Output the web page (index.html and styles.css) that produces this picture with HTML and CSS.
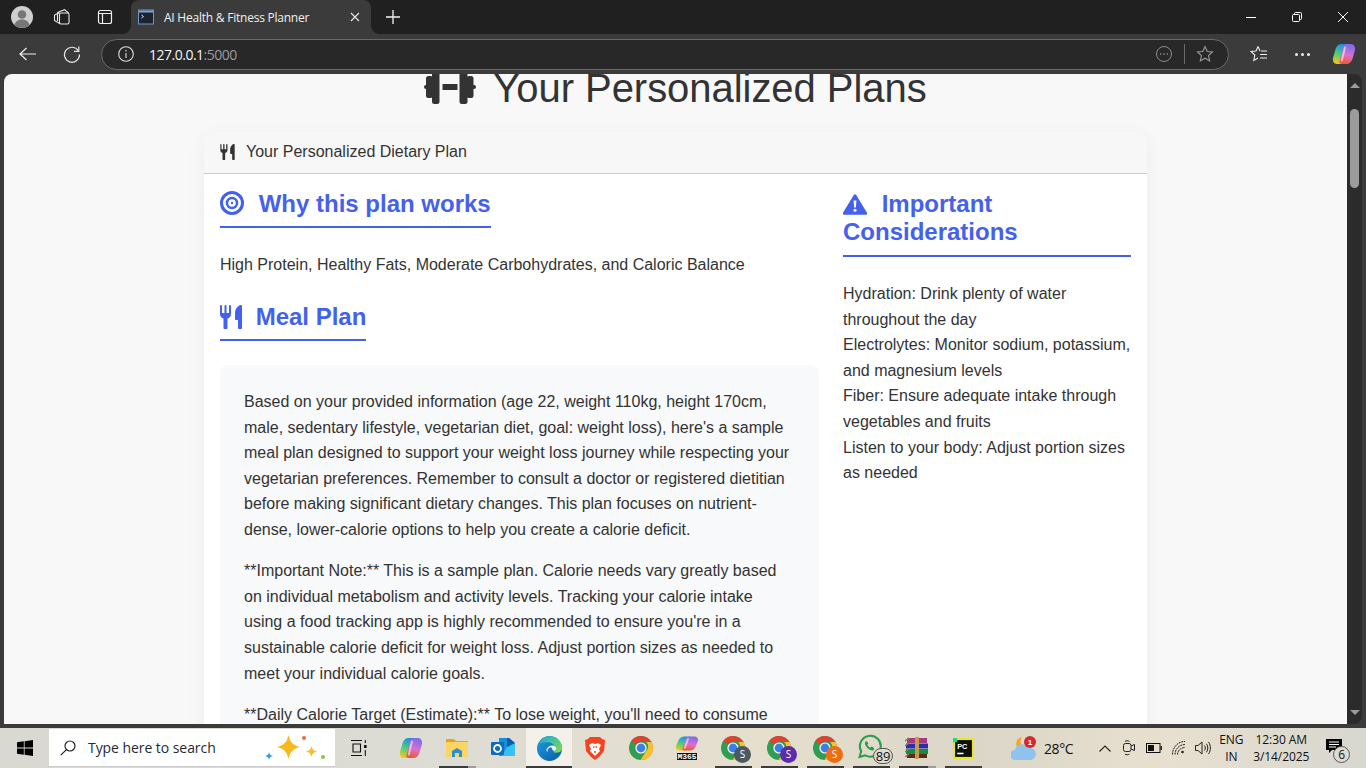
FILE: index.html
```html
<!DOCTYPE html>
<html lang="en">
<head>
<meta charset="utf-8">
<title>AI Health &amp; Fitness Planner</title>
<link rel="stylesheet" href="styles.css">
</head>
<body>
<header class="titlebar">
  <div class="avatar"><svg viewBox="0 0 22 22" width="22" height="22"><circle cx="11" cy="11" r="11" fill="#cfcfcf"/><circle cx="11" cy="8.500" r="4.300" fill="#767676"/><path d="M3.500 19c1-4 4-5.500 7.500-5.500s6.500 1.500 7.500 5.500a11 11 0 0 1-15 0z" fill="#767676"/></svg></div>
  <div class="tb-icon workspaces"><svg viewBox="0 0 18 18" width="18" height="18" fill="none" stroke="#e8e8e8" stroke-width="1.100"><rect x="6.500" y="5" width="9.500" height="11" rx="1.500"/><path d="M4.500 4.500l7-2.800 4 3.300M1.500 7l5-2.300M1.500 7v5.500l5.500 3.300M4.500 4.500V13"/></svg></div>
  <div class="tb-icon tabs"><svg viewBox="0 0 16 16" width="16" height="16" fill="none" stroke="#f0f0f0" stroke-width="1.200"><rect x="1.500" y="1.500" width="13" height="13" rx="2"/><path d="M1.500 4.500h13M5.500 4.500v10"/></svg></div>
  <div class="tab">
    <svg class="favicon" viewBox="0 0 16 16" width="16" height="16"><rect x="0.500" y="1" width="15" height="14" fill="#1d2430" stroke="#6f95c8"/><rect x="1" y="1.500" width="14" height="2" fill="#7ea6d8"/><path d="M3.500 6l2 1.500-2 1.500" fill="none" stroke="#dfe6ef" stroke-width="1"/></svg>
    <span class="tab-title">AI Health &amp; Fitness Planner</span>
    <svg class="tab-close" viewBox="0 0 10 10" width="10" height="10" stroke="#e8e8e8" stroke-width="1.100"><path d="M1 1l8 8M9 1l-8 8"/></svg>
  </div>
  <svg class="newtab" viewBox="0 0 14 14" width="14" height="14" stroke="#f2f2f2" stroke-width="1.300"><path d="M7 0v14M0 7h14"/></svg>
  <div class="winctl">
    <svg viewBox="0 0 10 10" width="10" height="10" stroke="#fff" stroke-width="1"><path d="M0 5.500h10"/></svg>
    <svg viewBox="0 0 10 10" width="10" height="10" fill="none" stroke="#fff" stroke-width="1"><rect x="0.500" y="2.500" width="7" height="7" rx="1"/><path d="M2.500 2.500v-1a1 1 0 0 1 1-1h5a1 1 0 0 1 1 1v5a1 1 0 0 1-1 1h-1"/></svg>
    <svg viewBox="0 0 10 10" width="10" height="10" stroke="#fff" stroke-width="1"><path d="M0 0l10 10M10 0l-10 10"/></svg>
  </div>
</header>

<nav class="toolbar">
  <svg class="back" viewBox="0 0 18 14" width="18" height="14" fill="none" stroke="#f0f0f0" stroke-width="1.200"><path d="M1 7h16M7.500 1l-6.500 6 6.500 6"/></svg>
  <svg class="reload" viewBox="0 0 18 18" width="18" height="18" fill="none" stroke="#e8e8e8" stroke-width="1.200"><path d="M15.500 6a7.500 7.500 0 1 0 1 3.500"/><path d="M15.800 1.500v4.800h-4.800"/></svg>
  <div class="address">
    <svg class="info" viewBox="0 0 16 16" width="16" height="16" fill="none" stroke="#e0e0e0" stroke-width="1.100"><circle cx="8" cy="8" r="7.300"/><path d="M8 7v5M8 4v1.500"/></svg>
    <span class="url"><span class="host">127.0.0.1</span>:5000</span>
    <svg class="dots-circle" viewBox="0 0 16 16" width="16" height="16" fill="none" stroke="#8c8c8c" stroke-width="1"><circle cx="8" cy="8" r="7.500"/><path d="M4 8h1.300M7.300 8h1.400M10.700 8h1.300" stroke-width="1.300"/></svg>
    <span class="addr-div"></span>
    <svg class="star" viewBox="0 0 18 18" width="18" height="18" fill="none" stroke="#9a9a9a" stroke-width="1.100"><path d="M9 1.500l2.200 5 5.300.5-4 3.600 1.200 5.400-4.700-2.800-4.700 2.800 1.200-5.400-4-3.600 5.300-.5z"/></svg>
  </div>
  <svg class="fav" viewBox="0 0 18 18" width="18" height="18" fill="none" stroke="#eee" stroke-width="1.100"><path d="M8 1.500l2 4.500M8 1.500L6 6l-5 .5 3.800 3.500-1 5.500L8 13"/><path d="M11 6h6M10 9.500h7M10 13h7"/></svg>
  <div class="more"><i></i><i></i><i></i></div>
  <svg class="copilot-top" viewBox="0 0 24 24" width="24" height="24"><use href="#copilot"/></svg>
</nav>

<div class="main">
  <div class="page">
    <h1 class="title">
      <svg class="ic-dumbbell" viewBox="0 0 52 36" width="52" height="36" fill="#333"><rect x="8" y="0" width="7.500" height="34" rx="2.500"/><rect x="2" y="6" width="7" height="22" rx="2.500"/><rect x="0" y="15" width="4" height="4" rx="2"/><rect x="35.500" y="0" width="8" height="34" rx="2.500"/><rect x="42.500" y="6" width="7" height="22" rx="2.500"/><rect x="48" y="15" width="4" height="4" rx="2"/><rect x="18.500" y="14" width="15" height="6"/></svg>
      <span>Your Personalized Plans</span>
    </h1>
    <section class="card">
      <div class="card-header">
        <svg class="ic-utensils-sm" viewBox="0 0 22 24" width="15" height="16" fill="#333"><use href="#utensils"/></svg>
        <span>Your Personalized Dietary Plan</span>
      </div>
      <div class="card-body">
        <div class="col-main">
          <h3 class="heading">
            <svg class="ic-target" viewBox="0 0 24 24" width="24" height="24" fill="none" stroke="#4361ee"><circle cx="12" cy="12" r="10.500" stroke-width="3"/><circle cx="12" cy="12" r="5" stroke-width="2.500"/><circle cx="12" cy="12" r="1.200" fill="#4361ee" stroke="none"/></svg>
            <span>Why this plan works</span>
          </h3>
          <p class="summary">High Protein, Healthy Fats, Moderate Carbohydrates, and Caloric Balance</p>
          <h3 class="heading">
            <svg class="ic-utensils" viewBox="0 0 22 24" width="22" height="24" fill="#4361ee"><use href="#utensils"/></svg>
            <span>Meal Plan</span>
          </h3>
          <div class="meal-box">
            <p>Based on your provided information (age 22, weight 110kg, height 170cm, male, sedentary lifestyle, vegetarian diet, goal: weight loss), here's a sample meal plan designed to support your weight loss journey while respecting your vegetarian preferences. Remember to consult a doctor or registered dietitian before making significant dietary changes. This plan focuses on nutrient-dense, lower-calorie options to help you create a calorie deficit.</p>
            <p>**Important Note:** This is a sample plan. Calorie needs vary greatly based on individual metabolism and activity levels. Tracking your calorie intake using a food tracking app is highly recommended to ensure you're in a sustainable calorie deficit for weight loss. Adjust portion sizes as needed to meet your individual calorie goals.</p>
            <p>**Daily Calorie Target (Estimate):** To lose weight, you'll need to consume</p>
          </div>
        </div>
        <aside class="col-side">
          <h3 class="heading">
            <svg class="ic-warn" viewBox="0 0 24 21" width="24" height="21"><path d="M12 1.500L23 19.500H1z" fill="#4361ee" stroke="#4361ee" stroke-width="2.500" stroke-linejoin="round"/><path d="M10.600 6.500h2.800l-.5 7h-1.800z" fill="#fff"/><circle cx="12" cy="16.300" r="1.500" fill="#fff"/></svg>
            <span>Important Considerations</span>
          </h3>
          <ul class="notes">
            <li>Hydration: Drink plenty of water throughout the day</li>
            <li>Electrolytes: Monitor sodium, potassium, and magnesium levels</li>
            <li>Fiber: Ensure adequate intake through vegetables and fruits</li>
            <li>Listen to your body: Adjust portion sizes as needed</li>
          </ul>
        </aside>
      </div>
    </section>
  </div>
  <div class="scrollbar">
    <span class="arrow up"></span>
    <span class="thumb"></span>
    <span class="arrow down"></span>
  </div>
</div>

<footer class="taskbar">
  <div class="start"><svg viewBox="0 0 16 16" width="16" height="16" fill="#000"><path d="M0 2.300l6.800-1v6.300H0zM7.600 1.200L16 0v7.600H7.600zM0 8.400h6.800v6.300l-6.800-1zM7.600 8.400H16V16l-8.400-1.200z"/></svg></div>
  <div class="search">
    <svg class="search-ic" viewBox="0 0 16 16" width="16" height="16" fill="none" stroke="#222" stroke-width="1.200"><circle cx="10" cy="6" r="5"/><path d="M6.400 9.600L.8 15.200"/></svg>
    <span class="search-text">Type here to search</span>
    <svg class="sparkles" viewBox="0 0 62 30" width="62" height="30"><path d="M24.500 2c1.800 7.500 4 9.800 11.500 12-7.500 2.200-9.700 4.500-11.500 12-1.800-7.500-4-9.800-11.500-12 7.500-2.200 9.700-4.500 11.500-12z" fill="#f9b81c"/><path d="M47.500 13c1 3.500 2 4.500 5.500 5.500-3.500 1-4.500 2-5.500 5.500-1-3.500-2-4.500-5.500-5.500 3.500-1 4.500-2 5.500-5.500z" fill="#f9c02c"/><path d="M5 19c.6 2.700 1.300 3.400 4 4-2.700.6-3.400 1.300-4 4-.6-2.700-1.300-3.400-4-4 2.700-.6 3.400-1.300 4-4z" fill="#2e9fe6"/><circle cx="40" cy="5" r="2" fill="#ee6a3a"/><circle cx="59" cy="24" r="2" fill="#8cc63f"/></svg>
  </div>
  <div class="app first"><svg viewBox="0 0 16 16" width="16" height="16" fill="none" stroke="#111" stroke-width="1.100"><path d="M0 .5h11M0 15.500h11M2 4h7.500v8H2z"/><rect x="13" y="5" width="2.600" height="3" fill="#111" stroke="none"/><path d="M14.300 0v3M14.300 10v6"/></svg></div>
  <div class="app"><svg viewBox="0 0 24 24" width="24" height="24"><use href="#copilot"/></svg></div>
  <div class="app running partial"><svg viewBox="0 0 22 20" width="22" height="20"><path d="M0 2a1 1 0 0 1 1-1h7l2 2h11a1 1 0 0 1 1 1v14a1 1 0 0 1-1 1H1a1 1 0 0 1-1-1z" fill="#e8a317"/><rect y="4" width="22" height="15" rx="1" fill="#fcd462"/><path d="M6 13l5-3 5 3v6h-3v-4H9v4H6z" fill="#2b8fd8"/></svg></div>
  <div class="app"><svg viewBox="0 0 24 22" width="24" height="22"><path d="M8 1h10l6 5v12a1 1 0 0 1-1 1H9a1 1 0 0 1-1-1z" fill="#1590d8"/><path d="M16 10l8-4v12a1 1 0 0 1-1 1H11z" fill="#34c3f0"/><path d="M16 1h2l6 5-8 4z" fill="#0b5fa8"/><rect x="0" y="5" width="13" height="13" rx="1" fill="#0f6cbd"/><circle cx="6.500" cy="11.500" r="3.500" fill="none" stroke="#fff" stroke-width="1.800"/></svg></div>
  <div class="app running active"><svg viewBox="0 0 24 24" width="25" height="25"><defs><linearGradient id="edgeg" x1="0" y1="0" x2="1" y2="1"><stop offset="0" stop-color="#1fa7d8"/><stop offset="1" stop-color="#7de04a"/></linearGradient><linearGradient id="edgeb" x1="0" y1="0" x2="1" y2="1"><stop offset="0" stop-color="#1e9ee0"/><stop offset="1" stop-color="#0a5aa8"/></linearGradient></defs><circle cx="12" cy="12" r="12" fill="url(#edgeb)"/><path d="M2 7C4 3 8 0 12 0c7 0 12 5 12 12 0 2-2 4-5 4-1.500 0-3-.3-3.500-1 2-.5 3-2 2-4-1-3-4-5-7-5C7 6 4 6.500 2 7z" fill="url(#edgeg)"/><path d="M9 14c0-3 3-5 6-5 2 0 3.500 1.500 3.500 3 0 1-1 2-2 2.500-1-.3-2-1.200-2-2.500 0-1.500-3-1.500-4 .5-.5 1-.5 2 0 3z" fill="#f0f4ee"/></svg></div>
  <div class="app"><svg viewBox="0 0 20 23" width="20" height="23"><path d="M5 0h10l2 2 3 1-1 11-5 6-4 3-4-3-5-6-1-11 3-1z" fill="#f4431f"/><path d="M10 7l3-1 3 2-2 4 1 2-5 5-5-5 1-2-2-4 3-2z" fill="#fff"/><path d="M8 10h1.500M10.500 10H12M9 15h2" stroke="#f4431f" stroke-width="1.300"/></svg></div>
  <div class="app"><svg viewBox="0 0 24 24" width="24" height="24"><use href="#chrome"/></svg></div>
  <div class="app m365"><svg viewBox="0 0 24 24" width="24" height="17" preserveAspectRatio="none"><use href="#copilot"/></svg><span class="m365-label">M365</span></div>
  <div class="app running"><svg viewBox="0 0 24 24" width="24" height="24"><use href="#chrome"/></svg><span class="badge-s b-slate">S</span></div>
  <div class="app running"><svg viewBox="0 0 24 24" width="24" height="24"><use href="#chrome"/></svg><span class="badge-s b-purple">S</span></div>
  <div class="app running"><svg viewBox="0 0 24 24" width="24" height="24"><use href="#chrome"/></svg><span class="badge-s b-orange">S</span></div>
  <div class="app running wa"><svg viewBox="0 0 24 24" width="25" height="25" fill="none"><path d="M2.500 22l1.500-5.500A10 10 0 1 1 8 20.500z" stroke="#2a9d4e" stroke-width="2"/><path d="M8 7.500c-1 1.500 0 4 2 6s4.500 3 6 2l.5-2-2.500-1.500-1 1c-1.500-.5-2.500-1.500-3-3l1-1L9.500 7z" fill="#2a9d4e"/></svg><span class="count-89">89</span></div>
  <div class="app running partial"><svg viewBox="0 0 24 22" width="24" height="22"><rect x="2" y="1" width="20" height="5" fill="#a8397f"/><rect x="1" y="6.500" width="22" height="5" fill="#2431a8"/><rect x="1" y="12" width="22" height="5" fill="#10903c"/><rect x="2" y="17" width="20" height="4" fill="#5e2a1e"/><path d="M0 4l4-3M0 9l4-3M0 15l4-3M0 20l4-3" stroke="#8c7a5c" stroke-width="1.500"/><rect x="10" y="0" width="4" height="22" fill="#c89a4e"/></svg></div>
  <div class="app running"><svg viewBox="0 0 20 20" width="21" height="21"><rect width="20" height="20" fill="#e8e62a"/><rect x="2" y="2" width="16" height="16" fill="#0b0f0c"/><rect x="0" y="0" width="4" height="4" fill="#21d789"/><text x="4" y="10" class="pc-text">PC</text><rect x="4" y="14" width="6" height="1.500" fill="#fff"/></svg></div>
  <div class="tray">
    <div class="weather">
      <svg viewBox="0 0 26 25" width="26" height="25"><path d="M11 1C6 2 4 6 6 11l6-1C9 8 9 4 11 1z" fill="#f5a623"/><path d="M4.500 24a5 5 0 0 1-.7-10A7.500 7.500 0 0 1 17.500 12 6 6 0 0 1 20 24z" fill="#8fc3ee"/><circle cx="19" cy="6" r="6" fill="#d9272e"/><text x="19" y="9" class="wx-one">1</text></svg>
      <span class="temp">28°C</span>
    </div>
    <svg class="t-chev" viewBox="0 0 12 7" width="12" height="7" fill="none" stroke="#222" stroke-width="1.100"><path d="M.5 6.500L6 1l5.500 5.500"/></svg>
    <svg class="t-meet" viewBox="0 0 12 16" width="12" height="16" fill="none" stroke="#222" stroke-width="1"><rect x="0.500" y="3.500" width="7.500" height="8" rx="2"/><path d="M8 6l3.500-1.500v6L8 9M2 1.500c1-1 3.500-1 4.500 0M2 14c1 1 3.500 1 4.500 0"/></svg>
    <svg class="t-batt" viewBox="0 0 16 10" width="16" height="10" fill="none" stroke="#111" stroke-width="1"><rect x="0.500" y="0.500" width="13.500" height="9"/><rect x="2" y="2" width="6" height="6" fill="#111" stroke="none"/><path d="M15.200 3v4" stroke-width="1.400"/></svg>
    <svg class="t-wifi" viewBox="0 0 14 14" width="14" height="14" fill="none" stroke="#222" stroke-width="1"><path d="M.5 13.500C.5 6 6 .5 13 .5M3 13.500C3 8 7.500 3.500 13 3.500M5.500 13.500c0-4 3.500-7 7.500-7" stroke-dasharray="2 .7"/><circle cx="10.500" cy="11" r="1.300" fill="#222" stroke="none"/></svg>
    <svg class="t-vol" viewBox="0 0 16 14" width="16" height="14" fill="none" stroke="#222" stroke-width="1"><path d="M.5 4.500h2.500L7 1v12L3 9.500H.5zM9.500 4.500c1 1.500 1 3.500 0 5M11.500 2.800c1.700 2.500 1.700 6 0 8.500M13.500 1c2.500 3.500 2.500 8.500 0 12"/></svg>
    <div class="lang"><span>ENG</span><span>IN</span></div>
    <div class="clock"><span>12:30 AM</span><span>3/14/2025</span></div>
    <div class="notif">
      <svg viewBox="0 0 16 15" width="16" height="15"><path d="M0 0h16v11H6l-3 3v-3H0z" fill="#000"/><path d="M3 3h10M3 5.500h10M3 8h7" stroke="#fff" stroke-width="1"/></svg>
      <span class="notif-count">6</span>
    </div>
  </div>
</footer>

<svg class="defs" width="0" height="0">
  <defs>
    <linearGradient id="cpA" x1="0.600" y1="0" x2="0.300" y2="1"><stop offset="0" stop-color="#1a8fe8"/><stop offset=".55" stop-color="#4fce7a"/><stop offset="1" stop-color="#f5c518"/></linearGradient>
    <linearGradient id="cpB" x1="0.600" y1="0" x2="0.400" y2="1"><stop offset="0" stop-color="#7d6bea"/><stop offset=".55" stop-color="#d86fd0"/><stop offset="1" stop-color="#f0582c"/></linearGradient>
    <symbol id="copilot" viewBox="0 0 24 24">
      <path d="M9 2h5c2 0 3 1 2.500 3L13 19c-.5 2-2 3-4 3H5c-3 0-4.500-3-4-6l2-7C4 5 6 2 9 2z" fill="url(#cpA)"/>
      <path d="M15 22h-5c-2 0-3-1-2.500-3L11 5c.5-2 2-3 4-3h4c3 0 4.500 3 4 6l-2 7c-1 4-3 7-6 7z" fill="url(#cpB)"/>
      <path d="M13 5.500L9.800 18.500" stroke="#fff" stroke-opacity=".55" stroke-width="2" stroke-linecap="round"/>
    </symbol>
    <symbol id="chrome" viewBox="0 0 24 24">
      <circle cx="12" cy="12" r="12" fill="#2f9e4f"/>
      <path d="M12 0a12 12 0 0 1 10.400 6H12a6 6 0 0 0-5.200 3L2.300 4.900A12 12 0 0 1 12 0z" fill="#dd4233"/>
      <path d="M22.400 6a12 12 0 0 1-10.900 18l5.700-9a6 6 0 0 0 0-9z" fill="#fbc02d"/>
      <circle cx="12" cy="12" r="5.600" fill="#fff"/><circle cx="12" cy="12" r="4.400" fill="#3f7ee8"/>
    </symbol>
    <symbol id="utensils" viewBox="0 0 22 24">
      <path d="M0 1a1 1 0 0 1 2 0v7h2.500V1a1 1 0 0 1 2 0v7H9V1a1 1 0 0 1 2 0v8c0 2.500-1.500 4-3.500 4.500v9a2 2 0 0 1-4 0v-9C1.500 13 0 11.500 0 9z"/>
      <path d="M22 1v21.500a2 2 0 0 1-4 0V15h-2a1 1 0 0 1-1-1V8c0-5 4-8 6-8a1 1 0 0 1 1 1z"/>
    </symbol>
  </defs>
</svg>
</body>
</html>
```
FILE: styles.css
```css
* { box-sizing: border-box; }
html, body { margin: 0; padding: 0; height: 100%; overflow: hidden; }
body {
  width: 1366px; height: 768px; display: flex; flex-direction: column;
  font-family: "Liberation Sans", Arial, sans-serif; background: #3b3b3b;
}
svg { display: block; flex: none; }
.defs { position: absolute; }

/* title bar */
.titlebar { height: 34px; background: #202020; display: flex; align-items: center; flex: none; }
.avatar { margin-left: 11px; width: 22px; }
.tb-icon { display: flex; }
.workspaces { margin-left: 20px; }
.tabs { margin-left: 26px; }
.tab {
  position: relative; margin-left: 18px; width: 240px; height: 34px; background: #3b3b3b; border-radius: 8px 8px 0 0;
  display: flex; align-items: center; padding: 0 11px 0 7px;
}
.tab::before, .tab::after { content: ""; position: absolute; bottom: 0; width: 8px; height: 8px; }
.tab::before { left: -8px; background: radial-gradient(circle at 0 0, #202020 7.5px, #3b3b3b 8px); }
.tab::after { right: -8px; background: radial-gradient(circle at 100% 0, #202020 7.5px, #3b3b3b 8px); }
.favicon { margin-right: 10px; }
.tab-title { font: 12px "Open Sans", sans-serif; color: #f0f0f0; flex: 1; white-space: nowrap; letter-spacing: -.23px; }
.newtab { margin-left: 15px; }
.winctl { margin-left: auto; display: flex; gap: 36px; padding-right: 18px; }

/* toolbar */
.toolbar { height: 40px; background: #3b3b3b; display: flex; align-items: center; flex: none; }
.back { margin-left: 19px; }
.reload { margin-left: 26px; }
.address {
  margin-left: 20px; width: 1128px; height: 31px; background: #282828; border: 1px solid #6a6a6a;
  border-radius: 16px; display: flex; align-items: center; padding: 0 14px 0 16px;
}
.url { margin-left: 15px; font: 14px "Open Sans", sans-serif; color: #9a9a9a; flex: 1; letter-spacing: -.5px; }
.host { color: #f4f4f4; }
.addr-div { width: 1px; height: 20px; background: #6a6a6a; margin: 0 11px 0 12px; }
.fav { margin-left: 21px; }
.more { margin-left: 27px; display: flex; gap: 3px; }
.more i { width: 3px; height: 3px; background: #eee; border-radius: 50%; }
.copilot-top { margin-left: 22px; }

/* main area */
.main { flex: 1; min-height: 0; display: flex; padding: 0 4px 4px 4px; overflow: hidden; }
.page { flex: 1; min-width: 0; background: #f8f8f8; border-radius: 8px 0 0 0; overflow: hidden; color: #333; }
.title {
  margin: -10px 0 20px; font-size: 40px; line-height: 48px; font-weight: 400; color: #333; letter-spacing: -.04px;
  display: flex; justify-content: center; align-items: center; gap: 17px;
}
.card {
  width: 943px; margin: 0 auto; background: #fff; border-radius: 12px 12px 0 0;
  box-shadow: 0 4px 20px rgba(0,0,0,.05);
}
.card-header {
  height: 42px; background: #f7f7f7; border-bottom: 1px solid #ccc; border-radius: 12px 12px 0 0;
  display: flex; align-items: center; padding: 0 16px 2px; gap: 11px; font-size: 16px; color: #333;
}
.card-body { display: flex; gap: 24px; padding: 16px; }
.col-main { width: 599px; flex: none; }
.col-side { width: 288px; flex: none; }
.heading {
  display: inline-block; margin: 0 0 24px; padding-bottom: 8px; border-bottom: 2px solid #4361ee;
  font-size: 24px; line-height: 28px; font-weight: 700; color: #4361ee; vertical-align: top;
}
.heading svg { display: inline-block; vertical-align: -3px; margin-right: 8px; }
.heading .ic-utensils { vertical-align: -4px; margin-right: 7px; }
.col-side .heading { display: block; padding-bottom: 9px; margin-bottom: 24.1px; }
.summary { margin: 0 0 25px; font-size: 16px; line-height: 25.6px; }
.meal-box { margin-top: .4px; background: #f8f9fa; border-radius: 8px; padding: 24px; font-size: 16px; line-height: 25.6px; height: 400px; }
.meal-box p { margin: 0 0 15.7px; }
.notes { list-style: none; margin: 0; padding: 0; font-size: 16px; line-height: 25.6px; }

/* scrollbar */
.scrollbar {
  width: 15px; background: #2b2b2b; border-radius: 0 8px 8px 0; display: flex; flex-direction: column;
  align-items: center; padding-top: 9px; margin-right: 0;
}
.thumb { width: 9px; height: 79px; background: #9b9b9b; border-radius: 5px; margin-top: 21px; }
.arrow { width: 0; height: 0; border-left: 5px solid transparent; border-right: 5px solid transparent; }
.arrow.up { border-bottom: 5px solid #9b9b9b; }
.arrow.down { border-top: 5px solid #9b9b9b; margin-top: auto; margin-bottom: 9px; }

/* taskbar */
.taskbar {
  height: 40px; flex: none; display: flex; align-items: stretch;
  background: linear-gradient(90deg, #d9d8d1 0%, #dcdcd5 30%, #e6dfce 55%, #dbd6c8 72%, #e8e0cf 85%, #d7d7d0 100%);
}
.start { width: 49px; display: flex; align-items: center; justify-content: center; }
.search {
  width: 286px; margin: 1px 1px 1px 0; background: #fff; display: flex; align-items: center; padding-left: 11px; border-bottom: 1px solid #ccc;
}
.search-text { margin-left: 12px; font: 14px "Open Sans", sans-serif; color: #1f2a36; flex: 1; letter-spacing: -.06px; white-space: nowrap; }
.sparkles { margin-right: 9px; }
.app { width: 46px; flex: none; display: flex; align-items: center; justify-content: center; position: relative; }
.app.first { margin-right: 6px; }
.app.running::after {
  content: ""; position: absolute; left: 5px; right: 4px; bottom: 0; height: 2px; background: #3c3c3c;
}
.app.partial::before {
  content: ""; position: absolute; left: 34px; right: 4px; bottom: 0; height: 2px; background: #9c9c9c; z-index: 1;
}
.app.active { background: #f4f1ea; }
.app.active::after { left: 0; right: 0; }
.app.wa svg { margin-left: -3px; margin-top: -3px; }
.m365 { flex-direction: column; gap: 1px; padding-bottom: 2px; }
.m365-label { background: #111; color: #fff; font: 700 8px "Liberation Mono", monospace; line-height: 7px; }
.badge-s {
  position: absolute; left: 24px; top: 18px; width: 17px; height: 17px; border-radius: 50%; color: #fff;
  font: 10px/17px "Open Sans", sans-serif; text-align: center;
}
.b-slate { background: #4b5963; }
.b-purple { background: #5a2ea6; }
.b-orange { background: #ee6c12; }
.count-89 {
  position: absolute; left: 25px; top: 20px; width: 20px; height: 16px; border-radius: 8px; background: #dcdcd5;
  border: 1px solid #555; font: 13px/14px "Open Sans", sans-serif; letter-spacing: -.3px; text-align: center; color: #111;
}
.pc-text { font: 700 7px "Liberation Sans", sans-serif; fill: #fff; }
.wx-one { font: 700 8px "Liberation Sans", sans-serif; fill: #fff; text-anchor: middle; }
.tray { flex: 1; display: flex; align-items: center; padding-left: 25px; color: #111; font: 12px "Open Sans", sans-serif; }
.weather { display: flex; align-items: center; gap: 7px; }
.temp { font-size: 14px; letter-spacing: -.4px; }
.t-chev { margin-left: 26px; }
.t-meet { margin-left: 12px; }
.t-batt { margin-left: 11px; }
.t-wifi { margin-left: 10px; }
.t-vol { margin-left: 9px; }
.lang, .clock { display: flex; flex-direction: column; align-items: center; line-height: 17px; }
.lang { margin-left: 8px; width: 24px; letter-spacing: -.1px; }
.clock { margin-left: 7px; width: 62px; letter-spacing: -.1px; }
.notif { margin-left: 14px; position: relative; padding-bottom: 4px; }
.notif-count {
  position: absolute; left: 7px; top: 7px; width: 17px; height: 17px; border: 1px solid #555; border-radius: 50%;
  background: #dcdcd5; text-align: center; font: 12px/15px "Open Sans", sans-serif;
}
```
